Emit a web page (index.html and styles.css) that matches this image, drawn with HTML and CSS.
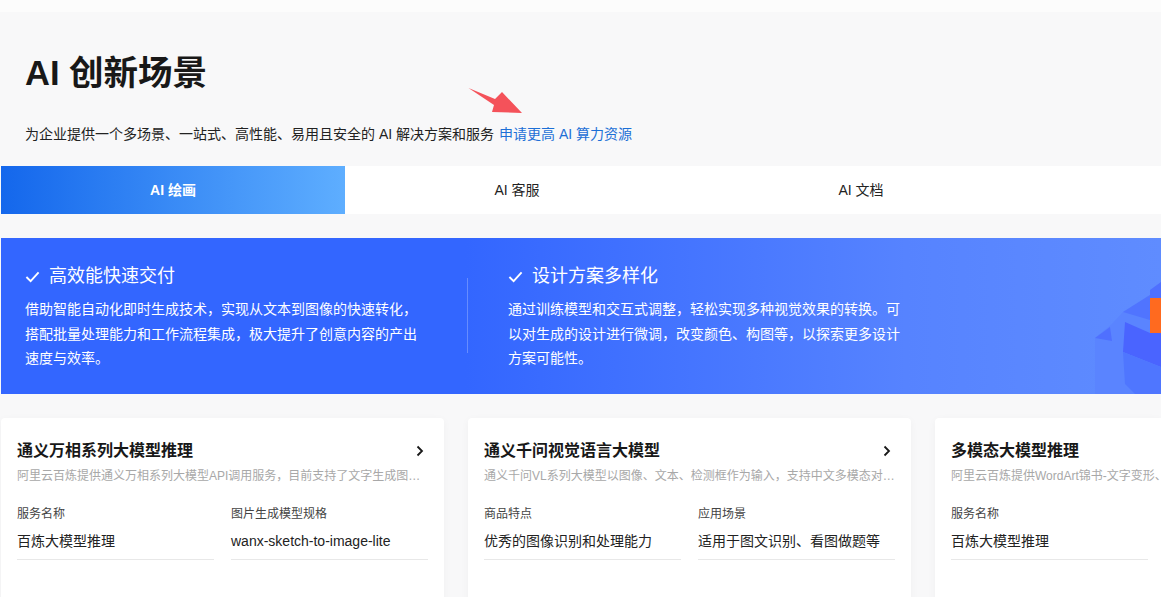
FILE: index.html
```html
<!DOCTYPE html>
<html lang="zh-CN">
<head>
<meta charset="UTF-8" />
<meta name="viewport" content="width=device-width, initial-scale=1" />
<title>AI 创新场景</title>
<link rel="stylesheet" href="styles.css">
</head>
<body>

<div class="top-strip"></div>

<!-- Header -->
<div class="intro">
  <h1 class="intro-title">AI 创新场景</h1>
  <p class="intro-text">为企业提供一个多场景、一站式、高性能、易用且安全的 AI 解决方案和服务<a class="intro-link" href="#">申请更高 AI 算力资源</a></p>
  <svg class="red-arrow" viewBox="0 0 60 30" aria-hidden="true">
    <polygon points="0.5,1 27,12 34,5 54,26 24,25 26,18" />
  </svg>
</div>

<!-- Tabs -->
<div class="tabs">
  <button class="tab tab-active">AI 绘画</button>
  <button class="tab">AI 客服</button>
  <button class="tab">AI 文档</button>
</div>

<!-- Banner -->
<div class="banner">
  <div class="banner-col">
    <h3 class="banner-head">
      <svg class="check" viewBox="0 0 16 16"><path d="M1.5 8.5 L6 13 L14.5 3.5" /></svg>
      高效能快速交付
    </h3>
    <p class="banner-text">借助智能自动化即时生成技术，实现从文本到图像的快速转化，搭配批量处理能力和工作流程集成，极大提升了创意内容的产出速度与效率。</p>
  </div>
  <div class="banner-line"></div>
  <div class="banner-col">
    <h3 class="banner-head">
      <svg class="check" viewBox="0 0 16 16"><path d="M1.5 8.5 L6 13 L14.5 3.5" /></svg>
      设计方案多样化
    </h3>
    <p class="banner-text">通过训练模型和交互式调整，轻松实现多种视觉效果的转换。可以对生成的设计进行微调，改变颜色、构图等，以探索更多设计方案可能性。</p>
  </div>
  <svg class="banner-art" viewBox="0 0 68 120" aria-hidden="true">
    <polygon points="2,64 19,50 30,38 57,21 68,8 68,120 2,120" fill="#5a84ff" />
    <polygon points="2,64 17,53 19,67" fill="#4f70ff" />
    <polygon points="30,38 57,21 57,46" fill="#5074ff" />
    <polygon points="57,16 68,8 68,24 57,24" fill="#4f70ff" />
    <polygon points="32,48 57,59 68,59 68,93 30,78" fill="#4a64ff" />
    <polygon points="30,78 68,93 68,120 42,120 32,110" fill="#4f76ff" />
    <rect x="57" y="24" width="11" height="35" fill="#ff6a1f" />
  </svg>
</div>

<!-- Product cards -->
<div class="cards">
  <div class="card">
    <div class="card-head">
      <h4 class="card-title">通义万相系列大模型推理</h4>
      <svg class="chevron" viewBox="0 0 10 12"><path d="M2.5 1.5 L7 6 L2.5 10.5" /></svg>
    </div>
    <p class="card-desc">阿里云百炼提供通义万相系列大模型API调用服务，目前支持了文字生成图…</p>
    <div class="specs">
      <div class="spec">
        <div class="spec-label">服务名称</div>
        <div class="spec-value">百炼大模型推理</div>
      </div>
      <div class="spec">
        <div class="spec-label">图片生成模型规格</div>
        <div class="spec-value">wanx-sketch-to-image-lite</div>
      </div>
    </div>
  </div>

  <div class="card">
    <div class="card-head">
      <h4 class="card-title">通义千问视觉语言大模型</h4>
      <svg class="chevron" viewBox="0 0 10 12"><path d="M2.5 1.5 L7 6 L2.5 10.5" /></svg>
    </div>
    <p class="card-desc">通义千问VL系列大模型以图像、文本、检测框作为输入，支持中文多模态对…</p>
    <div class="specs">
      <div class="spec">
        <div class="spec-label">商品特点</div>
        <div class="spec-value">优秀的图像识别和处理能力</div>
      </div>
      <div class="spec">
        <div class="spec-label">应用场景</div>
        <div class="spec-value">适用于图文识别、看图做题等</div>
      </div>
    </div>
  </div>

  <div class="card card-last">
    <div class="card-head">
      <h4 class="card-title">多模态大模型推理</h4>
    </div>
    <p class="card-desc">阿里云百炼提供WordArt锦书-文字变形、</p>
    <div class="specs">
      <div class="spec">
        <div class="spec-label">服务名称</div>
        <div class="spec-value">百炼大模型推理</div>
      </div>
    </div>
  </div>
</div>

</body>
</html>
```

FILE: styles.css
```css
/* Reset and base */
* {
  box-sizing: border-box;
}
html, body {
  height: 100%;
  overflow: hidden;
}
body {
  margin: 0;
  padding-left: 1px;
  font-family: "Liberation Sans", "Noto Sans CJK SC", sans-serif;
  background-color: #f8f8f9;
  color: #181818;
}
.top-strip {
  height: 12px;
  margin-left: -1px;
  background-color: #fcfcfc;
}
/* Header */
.intro {
  position: relative;
  height: 154px;
  padding: 41px 0 0 24px;
}
.intro-title {
  margin: 0;
  font-size: 34.5px;
  line-height: 40px;
  font-weight: 700;
}
.intro-text {
  margin: 32px 0 0;
  font-size: 14px;
  line-height: 18px;
  color: #222;
}
.intro-link {
  margin-left: 5px;
  color: #1c6fd6;
  text-decoration: none;
}
.red-arrow {
  position: absolute;
  left: 467px;
  top: 75px;
  width: 60px;
  height: 30px;
  fill: #f4525a;
}
/* Tabs */
.tabs {
  display: flex;
  height: 48px;
  background-color: #fff;
}
.tab {
  width: 344px;
  padding: 0 0 2px;
  border: none;
  background: none;
  font-family: inherit;
  font-size: 14px;
  color: #222;
  cursor: pointer;
}
.tab-active {
  background: linear-gradient(90deg, #1467ec, #5eaeff);
  color: #fff;
  font-weight: 700;
}
/* Banner */
.banner {
  position: relative;
  display: flex;
  align-items: flex-start;
  height: 156px;
  margin-top: 24px;
  padding: 26px 0 0 24px;
  background: linear-gradient(90deg, #3366ff 40%, #5683ff 78%, #5f8cff);
  color: #fff;
  overflow: hidden;
}
.banner-col {
  width: 396px;
}
.banner-head {
  display: flex;
  align-items: center;
  gap: 9px;
  margin: 0;
  font-size: 18px;
  line-height: 24px;
  font-weight: 400;
}
.check {
  width: 15px;
  height: 15px;
  fill: none;
  stroke: #fff;
  stroke-width: 2;
}
.banner-text {
  margin: 9px 0 0;
  font-size: 14px;
  line-height: 24.5px;
}
.banner-line {
  width: 1px;
  height: 75px;
  margin: 14px 40px 0 46px;
  background-color: rgba(255, 255, 255, 0.25);
}
.banner-art {
  position: absolute;
  right: 0;
  bottom: 0;
  width: 68px;
  height: 120px;
}
/* Cards */
.cards {
  display: flex;
  gap: 24px;
  margin-top: 24px;
}
.card {
  flex: 0 0 443px;
  min-width: 0;
  height: 300px;
  padding: 23px 16px 0;
  background-color: #fff;
  border-radius: 4px;
  box-shadow: 0 2px 8px rgba(0, 0, 0, 0.04);
}
.card-last {
  flex: 0 0 226px;
  padding-right: 0;
  border-radius: 4px 0 0 4px;
}
.card-last .spec {
  flex: 0 0 197px;
}
.card-head {
  display: flex;
  align-items: center;
  justify-content: space-between;
  height: 20px;
  padding-right: 1px;
}
.card-title {
  margin: 0;
  font-size: 16px;
  line-height: 20px;
  font-weight: 700;
}
.chevron {
  width: 10px;
  height: 12px;
  margin-right: 2px;
  fill: none;
  stroke: #181818;
  stroke-width: 1.8;
}
.card-desc {
  margin: 6px 0 0;
  font-size: 12px;
  line-height: 18px;
  color: #a8a8a8;
  white-space: nowrap;
}
.specs {
  display: flex;
  gap: 17px;
  margin-top: 20px;
}
.spec {
  flex: 1;
  min-width: 0;
  height: 55px;
  border-bottom: 1px solid #e8e8e8;
}
.spec-label {
  font-size: 12px;
  line-height: 18px;
  color: #444;
}
.spec-value {
  margin-top: 8px;
  font-size: 14px;
  line-height: 20px;
  color: #222;
  white-space: nowrap;
}
```
